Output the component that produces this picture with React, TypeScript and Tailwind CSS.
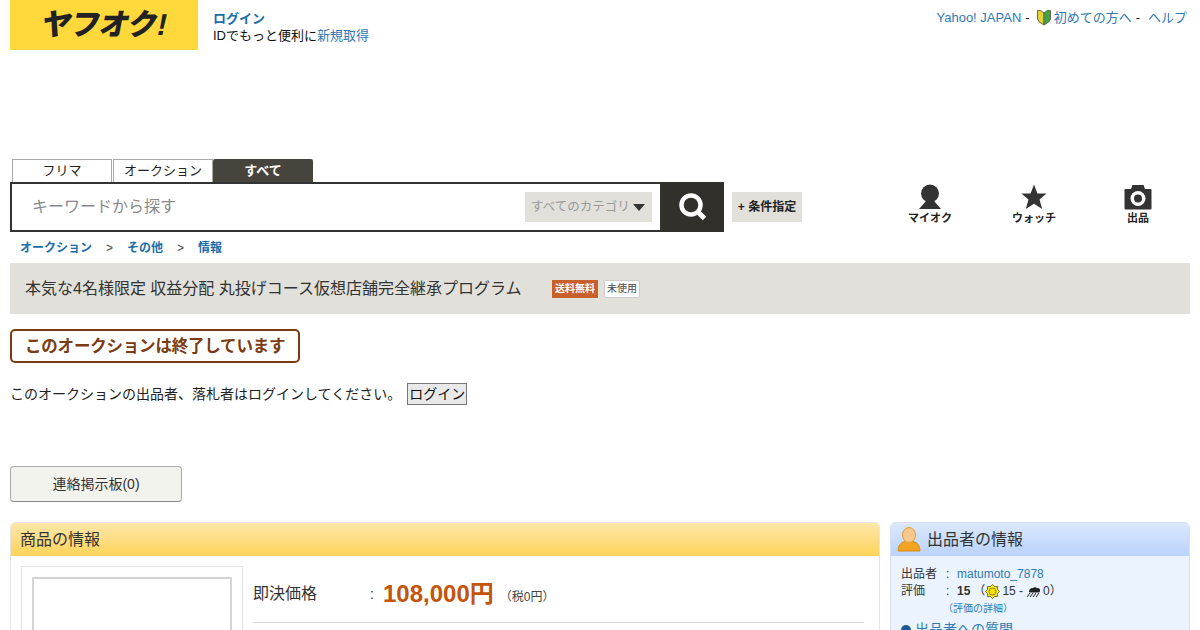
import React from "react";

const font = "font-['Liberation_Sans','Noto_Sans_CJK_JP',sans-serif]";

function Person() {
  return (
    <svg width="24" height="26" viewBox="0 0 24 26">
      <circle cx="12" cy="9.5" r="9" fill="#333" />
      <path d="M8 17 L16 17 L23 25 L1 25 Z" fill="#333" />
    </svg>
  );
}
function Star() {
  return (
    <svg width="26" height="26" viewBox="0 0 26 26">
      <path d="M13 0.5 L16.4 9.4 L25.6 9.6 L18.5 15.6 L21.2 25 L13 19.7 L4.8 25 L7.5 15.6 L0.4 9.6 L9.6 9.4 Z" fill="#333" />
    </svg>
  );
}
function Camera() {
  return (
    <svg width="28" height="26" viewBox="0 0 28 26">
      <path d="M1.5 5 H7 L8.5 1 H19.5 L21 5 H26.5 Q27.5 5 27.5 6 V24.5 Q27.5 25.5 26.5 25.5 H1.5 Q0.5 25.5 0.5 24.5 V6 Q0.5 5 1.5 5 Z" fill="#333" />
      <circle cx="14" cy="14.5" r="7.5" fill="#fff" />
      <circle cx="14" cy="14.5" r="4" fill="#333" />
    </svg>
  );
}
function Search() {
  return (
    <svg width="28" height="28" viewBox="0 0 28 28" fill="none">
      <circle cx="12" cy="12" r="9.5" stroke="#fff" strokeWidth="4.5" />
      <path d="M18.5 18.5 L25.5 25.5" stroke="#fff" strokeWidth="5" />
    </svg>
  );
}
function Leaf() {
  return (
    <svg width="16" height="17" viewBox="0 0 16 17">
      <path d="M8 4 Q5 0.5 1.5 1.5 L1.5 10 Q2 13 8 16 Z" fill="#e8d23a" stroke="#5f6b4a" />
      <path d="M8 4 Q11 0.5 14.5 1.5 L14.5 10 Q14 13 8 16 Z" fill="#3fa648" stroke="#5f6b4a" />
    </svg>
  );
}
function Sun() {
  return (
    <svg width="15" height="15" viewBox="0 0 15 15">
      <path d="M7.5 0.5 L9.5 2.5 L12.5 2.5 L12.5 5.5 L14.5 7.5 L12.5 9.5 L12.5 12.5 L9.5 12.5 L7.5 14.5 L5.5 12.5 L2.5 12.5 L2.5 9.5 L0.5 7.5 L2.5 5.5 L2.5 2.5 L5.5 2.5 Z" fill="#fff200" stroke="#444" strokeWidth="0.8" />
      <circle cx="7.5" cy="7.5" r="3.6" fill="#f6e000" stroke="#666" strokeWidth="0.8" />
    </svg>
  );
}
function Rain() {
  return (
    <svg width="15" height="12" viewBox="0 0 15 12">
      <path d="M3 6 Q3 2 7 2 Q9 0.5 11 2 Q14.5 2 14 5 Q14 6.5 12 6.5 H4 Z" fill="#222" />
      <path d="M4 7 L1 11 M7 7 L4 11 M10 7 L7 11 M13 7 L10 11" stroke="#222" strokeWidth="1" />
    </svg>
  );
}
function UserAvatar() {
  return (
    <svg width="24" height="25" viewBox="0 0 24 25">
      <path d="M1 24 Q1 16 8 14.5 L16 14.5 Q23 16 23 24 Z" fill="#f2a31f" stroke="#d98a12" />
      <ellipse cx="12" cy="8" rx="6.5" ry="7.5" fill="#f7c98f" stroke="#e69a2c" />
    </svg>
  );
}

function NavIcon({ icon, label }: { icon: React.ReactNode; label: string }) {
  return (
    <div className="flex w-[104px] flex-col items-center">
      <div className="flex h-[28px] items-end">{icon}</div>
      <span className="mt-[1px] text-[11px] leading-[15px] font-bold text-[#222]">{label}</span>
    </div>
  );
}

export default function App() {
  return (
    <div className={`${font} h-[630px] w-[1200px] overflow-hidden bg-white px-[10px] text-[#333]`}>
      {/* top */}
      <header className="flex h-[159px] items-start">
        <div className="flex h-[50px] w-[188px] items-center justify-center bg-[#ffd93b]">
          <span className="-skew-x-12 text-[30px] leading-none font-black tracking-[-1px] text-[#222]">ヤフオク!</span>
        </div>
        <div className="ml-[15px] pt-[10px] text-[13px] leading-[17px] text-[#111]">
          <div><a className="font-bold text-[#1a6ea8]">ログイン</a></div>
          <div>IDでもっと便利に<a className="text-[#2f7ab5]">新規取得</a></div>
        </div>
        <div className="ml-auto mr-[3px] flex items-center pt-[9px] text-[13px] leading-[17px] text-[#111]">
          <a className="text-[#2f7ab5]">Yahoo! JAPAN</a>
          <span className="ml-[4px]">-</span>
          <span className="ml-[6px]"><Leaf /></span>
          <a className="ml-[2px] text-[#2f7ab5]">初めての方へ</a>
          <span className="ml-[4px]">-</span>
          <a className="ml-[8px] text-[#2f7ab5]">ヘルプ</a>
        </div>
      </header>

      {/* tabs */}
      <div className="ml-[2px] flex h-[23px] items-end text-[13px] leading-[21px]">
        <div className="h-[23px] w-[100px] border border-b-0 border-[#aaa] bg-white text-center text-[#222]">フリマ</div>
        <div className="ml-[1px] h-[23px] w-[100px] border border-b-0 border-[#aaa] bg-white text-center text-[#222]">オークション</div>
        <div className="h-[23px] w-[100px] rounded-t-[2px] bg-[#47443d] pt-[1px] text-center font-bold text-white">すべて</div>
      </div>

      {/* search row */}
      <div className="flex items-start">
        <div className="flex h-[50px] w-[652px] items-center border-2 border-[#333] bg-white pr-[8px] pl-[20px]">
          <span className="text-[16px] text-[#8a8a8a]">キーワードから探す</span>
          <div className="ml-auto flex h-[30px] w-[127px] items-center bg-[#e1e0da] pl-[6px] text-[12.5px] text-[#999]">
            すべてのカテゴリ
            <span className="ml-[3px] h-0 w-0 border-x-[6px] border-t-[7px] border-x-transparent border-t-[#333]" />
          </div>
        </div>
        <div className="flex h-[50px] w-[62px] items-center justify-center bg-[#32302b]"><Search /></div>
        <div className="mt-[10px] ml-[8px] flex h-[30px] w-[70px] items-center justify-center bg-[#e1e0da] text-[12px] font-bold text-[#222]">+ 条件指定</div>
        <div className="ml-[76px] flex">
          <NavIcon icon={<Person />} label="マイオク" />
          <NavIcon icon={<Star />} label="ウォッチ" />
          <NavIcon icon={<Camera />} label="出品" />
        </div>
      </div>

      {/* breadcrumb */}
      <div className="flex h-[31px] items-center pl-[10px] text-[12px] text-[#1a6ea8]">
        <a className="font-bold">オークション</a>
        <span className="mx-[14px] font-normal text-[#444]">&gt;</span>
        <a className="font-bold">その他</a>
        <span className="mx-[14px] font-normal text-[#444]">&gt;</span>
        <a className="font-bold">情報</a>
      </div>

      {/* title */}
      <div className="flex h-[51px] items-center bg-[#e1e0da] pl-[15px]">
        <h1 className="w-[527px] text-[16px] text-[#333]">本気な4名様限定 収益分配 丸投げコース仮想店舗完全継承プログラム</h1>
        <span className="flex h-[18px] w-[46px] items-center justify-center bg-[#c9602c] text-[10px] font-bold text-white">送料無料</span>
        <span className="ml-[6px] flex h-[18px] w-[36px] items-center justify-center rounded-[2px] border border-[#ccc] bg-white text-[10px] text-[#444]">未使用</span>
      </div>

      {/* ended */}
      <div className="mt-[15px] flex h-[34px] w-[290px] items-center rounded-[5px] border-2 border-[#7a3c10] pl-[13px] text-[16.5px] font-bold tracking-[-0.2px] text-[#7a3c10]">
        このオークションは終了しています
      </div>

      <div className="mt-[20px] flex h-[22px] items-center text-[14px] text-[#222]">
        このオークションの出品者、落札者はログインしてください。
        <button className="ml-[6px] h-[22px] w-[60px] border border-[#777] bg-[#e9e9e9] text-[14px] text-[#111]">ログイン</button>
      </div>

      <button className="mt-[61px] block h-[36px] w-[172px] rounded-[4px] border border-[#aaa] border-b-[#888] bg-[#f3f3ee] text-[14px] text-[#333]">
        連絡掲示板(0)
      </button>

      {/* panels */}
      <div className="mt-[20px] flex gap-[10px]">
        <section className="w-[870px] overflow-hidden rounded-t-[5px] border border-[#e6e6e6]">
          <div className="flex h-[33px] items-center bg-gradient-to-b from-[#fde6a8] to-[#fed355] pl-[9px] text-[16px] text-[#333]">商品の情報</div>
          <div className="flex px-[10px] pt-[10px]">
            <div className="h-[200px] w-[222px] shrink-0 border border-[#e4e4e4] p-[10px]">
              <div className="h-[180px] w-[200px] border-2 border-[#d5d5d5]" />
            </div>
            <div className="ml-[10px] flex-1 pr-[5px]">
              <div className="flex h-[57px] items-center border-b border-[#d8d8d8]">
                <span className="w-[117px] text-[16px] text-[#333]">即決価格</span>
                <span className="w-[13px] text-[14px]">:</span>
                <span className="text-[24px] font-bold text-[#c4540a]">108,000円</span>
                <span className="mt-[6px] ml-[6px] text-[12px] text-[#444]">（税0円）</span>
              </div>
            </div>
          </div>
        </section>
        <section className="w-[300px] overflow-hidden rounded-t-[5px] border border-[#d5e1f2]">
          <div className="flex h-[33px] items-center gap-[6px] bg-gradient-to-b from-[#dbe8fc] to-[#b9d3fb] pl-[6px] text-[16px] text-[#333]">
            <UserAvatar />
            出品者の情報
          </div>
          <div className="h-[200px] bg-[#eaf3fe] pt-[10px] pl-[10px] text-[12px] leading-[17px] text-[#333]">
            <div className="flex">
              <span className="w-[45px]">出品者</span>
              <span className="w-[11px]">:</span>
              <a className="text-[#2f7ab5]">matumoto_7878</a>
            </div>
            <div className="flex items-center">
              <span className="w-[45px]">評価</span>
              <span className="w-[11px]">:</span>
              <b>15</b>
              <span className="ml-[3px]">（</span>
              <Sun />
              <span className="ml-[2px]">15 -</span>
              <span className="ml-[3px]"><Rain /></span>
              <span className="ml-[2px]">0）</span>
            </div>
            <div className="pl-[42px] text-[10px] leading-[17px] text-[#2f7ab5]">（評価の詳細）</div>
            <div className="mt-[4px] flex items-center text-[14px] text-[#2f7ab5]">
              <span className="mr-[4px] h-[10px] w-[10px] rounded-full bg-[#1a5a9a]" />
              出品者への質問
            </div>
          </div>
        </section>
      </div>
    </div>
  );
}
